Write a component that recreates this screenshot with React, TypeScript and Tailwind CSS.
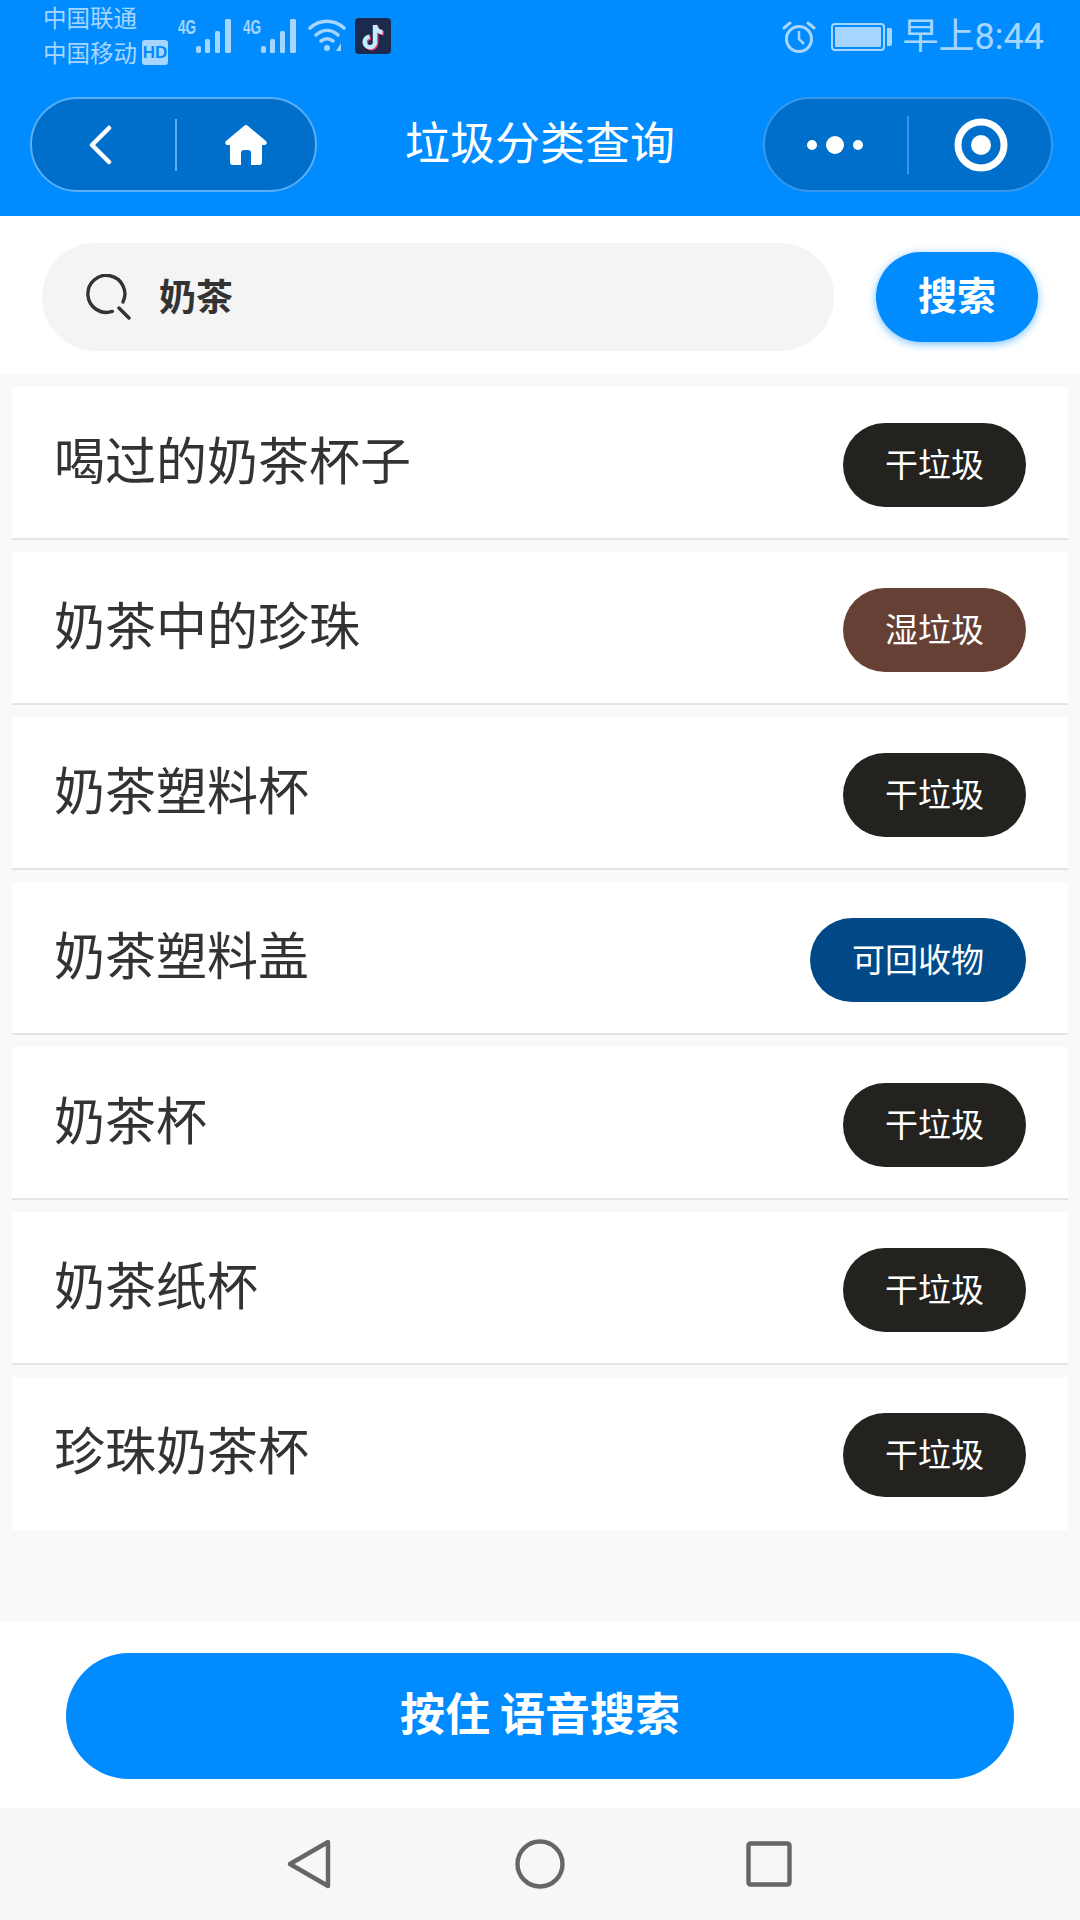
import React from "react";

const items: { name: string; tag: string; color: string; wide?: boolean }[] = [
  { name: "喝过的奶茶杯子", tag: "干垃圾", color: "bg-[#23221f]" },
  { name: "奶茶中的珍珠", tag: "湿垃圾", color: "bg-[#664035]" },
  { name: "奶茶塑料杯", tag: "干垃圾", color: "bg-[#23221f]" },
  { name: "奶茶塑料盖", tag: "可回收物", color: "bg-[#004886]", wide: true },
  { name: "奶茶杯", tag: "干垃圾", color: "bg-[#23221f]" },
  { name: "奶茶纸杯", tag: "干垃圾", color: "bg-[#23221f]" },
  { name: "珍珠奶茶杯", tag: "干垃圾", color: "bg-[#23221f]" },
];

function Signal() {
  return (
    <svg width="54" height="44" viewBox="0 0 54 44" className="shrink-0 -mt-[8px]">
      <text x="0" y="24" fontSize="21" fontWeight="700" fill="#a6d6ff" textLength="18" lengthAdjust="spacingAndGlyphs" fontFamily="'Liberation Sans',sans-serif">4G</text>
      <rect x="18" y="36" width="5" height="7" rx="2" fill="#a6d6ff" />
      <rect x="27" y="29" width="5" height="14" rx="1.5" fill="#a6d6ff" />
      <rect x="37" y="21" width="5" height="22" rx="1.5" fill="#a6d6ff" />
      <rect x="47" y="9" width="6" height="34" rx="1.5" fill="#a6d6ff" />
    </svg>
  );
}

function Wifi() {
  return (
    <svg width="38" height="34" viewBox="0 0 38 34" className="shrink-0" fill="none" stroke="#a6d6ff" strokeWidth="3.5" strokeLinecap="round">
      <path d="M2 10 C12 1 26 1 36 10" />
      <path d="M8 17 C15 11 23 11 30 17" />
      <path d="M13 23 C17 20 21 20 25 23" />
      <circle cx="19" cy="30" r="3" fill="#a6d6ff" stroke="none" />
      <path d="M28 33 L33 25 L33 33 Z" fill="#a6d6ff" stroke="none" />
    </svg>
  );
}

function TikTok() {
  const d = "M19 6 V23 A5.2 5.2 0 1 1 13.5 17.8 M19 6 C19.5 10 22.5 13 26.5 13.2";
  return (
    <svg width="36" height="36" viewBox="0 0 36 36" className="shrink-0">
      <rect width="36" height="36" rx="4" fill="#1c2a4d" />
      <g fill="none" strokeWidth="4.4" transform="translate(1 1)">
        <path d={d} stroke="#ff3d6e" transform="translate(1.2 1)" />
        <path d={d} stroke="#bfeeff" />
      </g>
    </svg>
  );
}

function Alarm() {
  return (
    <svg width="34" height="34" viewBox="0 0 34 34" className="shrink-0" fill="none" stroke="#a6d6ff" strokeWidth="3">
      <circle cx="17" cy="19" r="12.5" />
      <path d="M17 11 V19 L22 24" strokeWidth="2.5" />
      <path d="M2 8 L8 3 M32 8 L26 3" strokeLinecap="round" />
    </svg>
  );
}

export default function App() {
  return (
    <div className="w-[1080px] h-[1920px] flex flex-col bg-[#f9f9f9] font-['Noto_Sans_CJK_SC','Noto_Sans',sans-serif]">
      <div className="bg-[#008cff] h-[216px] shrink-0 flex flex-col">
        <div className="h-[97px] flex items-start justify-between pl-[43px] pr-[36px] text-[#a6d6ff]">
          <div className="flex items-start">
            <div className="flex flex-col text-[23.5px] leading-[35px]">
              <span>中国联通</span>
              <div className="flex items-center gap-[5px]">
                <span>中国移动</span>
                <span className="bg-[#a6d6ff] text-[#008cff] text-[17px] leading-[25px] h-[25px] w-[26px] rounded-[3px] font-bold text-center font-['Liberation_Sans',sans-serif]">HD</span>
              </div>
            </div>
            <div className="flex items-start gap-[11px] ml-[10px] mt-[18px]">
              <Signal />
              <Signal />
              <Wifi />
              <div className="-ml-[2px]">
                <TikTok />
              </div>
            </div>
          </div>
          <div className="flex items-center mt-[19px]">
            <Alarm />
            <div className="flex items-center ml-[15px]">
              <div className="w-[54px] h-[28px] border-2 border-[#a6d6ff] rounded-[4px] p-[2px]">
                <div className="w-full h-full bg-[#a6d6ff] rounded-[1px]" />
              </div>
              <div className="w-[5px] h-[18px] ml-[2px] bg-[#a6d6ff] rounded-r-[2px]" />
            </div>
            <span className="ml-[11px] text-[36px] leading-[36px] font-['Roboto','Noto_Sans_CJK_SC',sans-serif]">早上8:44</span>
          </div>
        </div>
        <div className="relative flex items-start justify-between pl-[30px] pr-[27px]">
          <div className="w-[287px] h-[95px] rounded-full bg-[#006fcc] border-2 border-[#59aef5] flex items-center">
            <div className="w-[143px] pr-[7px] flex justify-center">
              <svg width="26" height="40" viewBox="0 0 26 40" fill="none" stroke="#fff" strokeWidth="4.5" strokeLinecap="round" strokeLinejoin="round">
                <path d="M22 3 L5 20 L22 37" />
              </svg>
            </div>
            <div className="w-[2px] h-[52px] bg-[#59aef5]" />
            <div className="flex-1 flex justify-center">
              <svg width="44" height="42" viewBox="0 0 44 42" fill="#fff">
                <path d="M22 1 Q23 1 24 2 L42 17 Q44 20 41 21 L38 21 V38 Q38 41 35 41 H27 V29 Q27 26 24 26 H20 Q17 26 17 29 V41 H9 Q6 41 6 38 V21 L3 21 Q0 20 2 17 L20 2 Q21 1 22 1 Z" />
              </svg>
            </div>
          </div>
          <span className="absolute left-0 right-0 top-[12px] text-center text-white text-[45px] leading-[64px]">垃圾分类查询</span>
          <div className="w-[290px] h-[95px] rounded-full bg-[#006fcc] border-2 border-[#3797ea] flex items-center">
            <div className="w-[142px] pr-[2px] flex justify-center">
              <svg width="56" height="20" viewBox="0 0 56 20" fill="#fff">
                <circle cx="5" cy="10" r="5" />
                <circle cx="28" cy="10" r="9" />
                <circle cx="51" cy="10" r="5" />
              </svg>
            </div>
            <div className="w-[2px] h-[58px] bg-[#3797ea]" />
            <div className="flex-1 flex justify-center">
              <svg width="54" height="54" viewBox="0 0 54 54" className="ml-[2px]">
                <circle cx="27" cy="27" r="23" fill="none" stroke="#fff" strokeWidth="7" />
                <circle cx="27" cy="27" r="10" fill="#fff" />
              </svg>
            </div>
          </div>
        </div>
      </div>

      <div className="bg-white h-[158px] shrink-0 flex items-start pl-[42px] pr-[42px]">
        <div className="w-[792px] h-[108px] mt-[27px] rounded-full bg-[#f4f4f4] flex items-center pl-[44px]">
          <svg width="46" height="46" viewBox="0 0 46 46" fill="none" stroke="#333" strokeWidth="3.4" strokeLinecap="round">
            <path d="M37 28 A18.5 18.5 0 1 0 26.3 37.4" />
            <path d="M33 34 L43 44" />
          </svg>
          <span className="ml-[27px] pb-[5px] text-[37px] leading-[50px] font-bold text-[#333]">奶茶</span>
        </div>
        <div className="ml-[42px] mt-[36px] w-[162px] h-[90px] pb-[8px] rounded-full bg-[#008cff] shadow-[0_2px_8px_rgba(0,140,255,0.55)] flex items-center justify-center text-white text-[39px] font-bold">
          搜索
        </div>
      </div>

      <div className="flex-1 flex flex-col gap-[12px] pt-[13px] px-[12px]">
        {items.map((it, i) => (
          <div
            key={i}
            className={`h-[153px] bg-white border-b-2 flex items-center justify-between pl-[42px] pr-[42px] ${i < items.length - 1 ? "border-[#e4e4e4]" : "border-white"}`}
          >
            <span className="text-[51px] leading-[70px] text-[#333] mb-[9px]">{it.name}</span>
            <span
              className={`${it.color} ${it.wide ? "w-[216px]" : "w-[183px]"} h-[84px] mt-[4px] pb-[2px] rounded-full flex items-center justify-center text-white text-[33px]`}
            >
              {it.tag}
            </span>
          </div>
        ))}
      </div>

      <div className="bg-white h-[186px] shrink-0 flex items-start justify-center pt-[31px]">
        <div className="w-[948px] h-[126px] pb-[9px] rounded-full bg-[#008cff] flex items-center justify-center text-white text-[45px] font-bold">
          按住 语音搜索
        </div>
      </div>

      <div className="bg-[#f7f7f7] h-[112px] shrink-0 flex items-center justify-center pr-[2px]">
        <svg width="44" height="50" viewBox="0 0 44 50" fill="none" stroke="#666" strokeWidth="4.4" strokeLinejoin="round">
          <path d="M41 3 V47 L3 25 Z" />
        </svg>
        <svg width="50" height="50" viewBox="0 0 50 50" fill="none" stroke="#666" strokeWidth="4.4" className="ml-[184px]">
          <circle cx="25" cy="25" r="22.5" />
        </svg>
        <svg width="46" height="46" viewBox="0 0 46 46" fill="none" stroke="#666" strokeWidth="4.4" strokeLinejoin="round" className="ml-[181px]">
          <rect x="2.5" y="2.5" width="41" height="41" rx="2" />
        </svg>
      </div>
    </div>
  );
}
